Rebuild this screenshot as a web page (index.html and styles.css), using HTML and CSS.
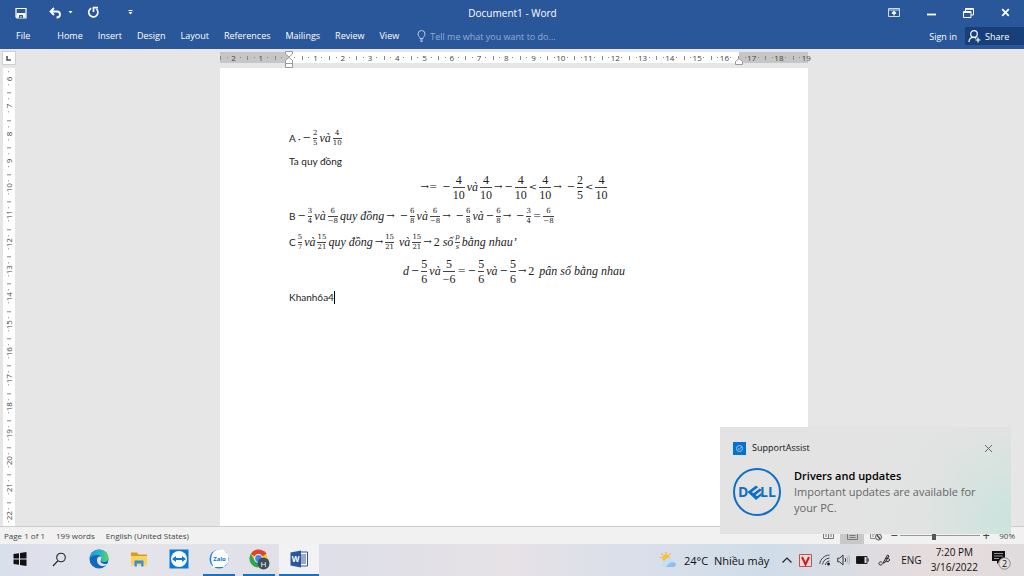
FILE: index.html
```html
<!DOCTYPE html>
<html lang="en">
<head>
<meta charset="utf-8">
<title>Document1 - Word</title>
<link rel="stylesheet" href="styles.css">
</head>
<body>
<div class="desktop">
  <header class="ribbon">
    <div class="titlebar">
      <div class="quick">
        <button class="icon-btn" aria-label="Save"><svg width="12" height="12" viewBox="0 0 12 12"><path d="M1 1.500h10v9.500H2L1 10z" fill="none" stroke="#fff" stroke-width="1.200"/><path d="M1.500 6h9v4.500h-9z" fill="#fff"/><path d="M4 8h4v3H6.500V9H5.500v2H4z" fill="#2a579a"/></svg></button>
        <button class="icon-btn undo" aria-label="Undo"><svg width="13" height="12" viewBox="0 0 13 12"><path d="M5 1 1.500 4.500 5 8M1.500 4.500H8a3 3 0 0 1 3 3c0 2-1.500 3-3.500 3" fill="none" stroke="#fff" stroke-width="1.800"/></svg></button>
        <button class="icon-btn drop" aria-label="Undo list"><svg width="5" height="3" viewBox="0 0 5 3"><path d="M.5 0h4L2.500 2.500z" fill="#fff"/></svg></button>
        <button class="icon-btn redo" aria-label="Repeat"><svg width="13" height="13" viewBox="0 0 13 13"><path d="M4.200 2.200A4.600 4.600 0 1 0 9.500 3M6.500 6V1.700H11" fill="none" stroke="#fff" stroke-width="1.700"/></svg></button>
        <button class="icon-btn more" aria-label="Customize toolbar"><svg width="5" height="5" viewBox="0 0 5 5"><path d="M.5 .5h4" stroke="#fff"/><path d="M.5 2h4L2.500 4.500z" fill="#fff"/></svg></button>
      </div>
      <h1 class="title">Document1 - Word</h1>
      <div class="window">
        <button class="icon-btn" aria-label="Ribbon display options"><svg width="12" height="9" viewBox="0 0 12 9"><path d="M.5.5h11v8H.5zM.5 2h11" fill="none" stroke="#cfdcf0"/><path d="M6 7.500V4M4 5.500 6 3.500l2 2" fill="none" stroke="#fff" stroke-width="1.300"/></svg></button>
        <button class="icon-btn" aria-label="Minimize"><svg width="9" height="9" viewBox="0 0 9 9"><path d="M0 6.500h9" stroke="#fff" stroke-width="1.800"/></svg></button>
        <button class="icon-btn" aria-label="Restore"><svg width="11" height="10" viewBox="0 0 11 10"><path d="M.5 3.500h7.500v6H.5zM.5 4.500h7.500M2.500 3V.5h8V7H8M2.500 1.300h8" fill="none" stroke="#fff"/></svg></button>
        <button class="icon-btn" aria-label="Close"><svg width="9" height="9" viewBox="0 0 9 9"><path d="m1.200 1.200 6.600 6.600m0-6.600L1.200 7.800" stroke="#fff" stroke-width="1.800"/></svg></button>
      </div>
    </div>
    <nav class="tabs">
      <button class="tab file">File</button>
      <button class="tab">Home</button>
      <button class="tab">Insert</button>
      <button class="tab">Design</button>
      <button class="tab">Layout</button>
      <button class="tab">References</button>
      <button class="tab">Mailings</button>
      <button class="tab">Review</button>
      <button class="tab">View</button>
      <label class="tell"><svg width="9" height="12" viewBox="0 0 9 12"><path d="M3 8.500C3 7 1 6.300 1 4a3.500 3.500 0 0 1 7 0c0 2.300-2 3-2 4.500zM3 10h3M3.500 11.500h2" fill="none" stroke="#b9cae6"/></svg><input type="text" placeholder="Tell me what you want to do..." aria-label="Tell me what you want to do"></label>
      <a class="signin" href="#">Sign in</a>
      <button class="share"><svg width="14" height="13" viewBox="0 0 14 13"><circle cx="6" cy="4" r="3.300" fill="none" stroke="#fff" stroke-width="1.200"/><path d="M1 12c0-3 2-4.700 4.500-4.700 1.200 0 2 .3 2.800.9M10 7.500v5M7.500 10h5" fill="none" stroke="#fff" stroke-width="1.200"/></svg>Share</button>
    </nav>
  </header>

  <main class="workspace">
    <div class="gutter">
      <button class="tabstop" aria-label="Tab stop"><svg width="6" height="6" viewBox="0 0 6 6"><path d="M1 1v4h4" fill="none" stroke="#555" stroke-width="1.600"/></svg></button>
      <div class="vruler"><div class="vscale">
        <span>6</span><span>7</span><span>8</span><span>9</span><span>10</span><span>11</span><span>12</span><span>13</span><span>14</span><span>15</span><span>16</span><span>17</span><span>18</span><span>19</span><span>20</span><span>21</span><span>22</span>
      </div></div>
    </div>
    <div class="canvas">
      <div class="hruler">
        <div class="hscale">
          <span>2</span><span>1</span><span class="zero"></span><span>1</span><span>2</span><span>3</span><span>4</span><span>5</span><span>6</span><span>7</span><span>8</span><span>9</span><span>10</span><span>11</span><span>12</span><span>13</span><span>14</span><span>15</span><span>16</span><span>17</span><span>18</span><span class="end">19</span>
        </div>
        <svg class="indent-left" width="8" height="17" viewBox="0 0 8 17"><path d="M.5.500h7V3L4 6 .5 3zM.5 12.500V9.500L4 6.500l3.500 3v3zM.5 12.500h7v4h-7z" fill="#fff" stroke="#999"/></svg>
        <svg class="indent-right" width="8" height="7" viewBox="0 0 8 7"><path d="M.5 6.500v-3L4 .5l3.500 3v3z" fill="#fff" stroke="#999"/></svg>
      </div>
      <article class="paper">
        <p class="line"><span>A ·</span><i class="op">−</i><span class="frac"><b>2</b><b>5</b></span><i>và</i><span class="frac"><b>4</b><b>10</b></span></p>
        <p class="line plain">Ta quy đồng</p>
        <p class="line display"><i class="op">→=</i><i class="op wide">−</i><span class="frac"><b>4</b><b>10</b></span><i>và</i><span class="frac"><b>4</b><b>10</b></span><i class="op">→</i><i class="op">−</i><span class="frac"><b>4</b><b>10</b></span><i class="op">&lt;</i><span class="frac"><b>4</b><b>10</b></span><i class="op">→</i><i class="op wide">−</i><span class="frac"><b>2</b><b>5</b></span><i class="op">&lt;</i><span class="frac"><b>4</b><b>10</b></span></p>
        <p class="line"><span>B</span><i class="op">−</i><span class="frac"><b>3</b><b>4</b></span><i>và</i><span class="frac"><b>6</b><b>−8</b></span><i>quy đồng</i><i class="op">→</i><i class="op wide">−</i><span class="frac"><b>6</b><b>8</b></span><i>và</i><span class="frac"><b>6</b><b>−8</b></span><i class="op">→</i><i class="op wide">−</i><span class="frac"><b>6</b><b>8</b></span><i>và</i><i class="op">−</i><span class="frac"><b>6</b><b>8</b></span><i class="op">→</i><i class="op wide">−</i><span class="frac"><b>3</b><b>4</b></span><i class="op">=</i><span class="frac"><b>6</b><b>−8</b></span></p>
        <p class="line"><span>C</span><span class="frac"><b>5</b><b>7</b></span><i>và</i><span class="frac"><b>15</b><b>21</b></span><i>quy đồng</i><i class="op">→</i><span class="frac"><b>15</b><b>21</b></span><i class="wide">và</i><span class="frac"><b>15</b><b>21</b></span><i class="op">→</i><i><em>2</em> số</i><span class="frac slant"><b>p</b><b>s</b></span><i>bằng nhau’</i></p>
        <p class="line display"><i>d</i><i class="op">−</i><span class="frac"><b>5</b><b>6</b></span><i>và</i><span class="frac"><b>5</b><b>−6</b></span><i class="op">=</i><i class="op">−</i><span class="frac"><b>5</b><b>6</b></span><i>và</i><i class="op">−</i><span class="frac"><b>5</b><b>6</b></span><i class="op">→</i><i><em>2</em></i><i class="wide">pân số bằng nhau</i></p>
        <p class="line plain">Khanh6a4<span class="caret"></span></p>
      </article>
    </div>
  </main>

  <footer class="status">
    <span>Page 1 of 1</span><span>199 words</span><span>English (United States)</span>
    <div class="views">
      <button class="view" aria-label="Read mode"><svg width="11" height="9" viewBox="0 0 11 9"><path d="M.5.5h4.500l.5.500.5-.5h4.500v7H6l-.5.500-.5-.5H.5zM5.500 1v7M2 3h2M2 5h2M7 3h2M7 5h2" fill="none" stroke="#777"/></svg></button>
      <button class="view active" aria-label="Print layout"><svg width="11" height="9" viewBox="0 0 11 9"><path d="M.5.5h10v8H.5zM2.500 2.500h6M2.500 4.500h6M2.500 6.500h6" fill="none" stroke="#777"/></svg></button>
      <button class="view" aria-label="Web layout"><svg width="12" height="10" viewBox="0 0 12 10"><path d="M6 .5H.5v7H5M2 3h3M2 5h2" fill="none" stroke="#888"/><circle cx="8.500" cy="6" r="3" fill="#eee" stroke="#555"/><path d="m7 4 3 4" stroke="#555" stroke-width="1.500"/></svg></button>
      <button class="zoom-btn" aria-label="Zoom out">−</button>
      <input class="zoom" type="range" min="10" max="200" value="90" aria-label="Zoom">
      <button class="zoom-btn" aria-label="Zoom in">+</button>
      <span class="percent">90%</span>
    </div>
  </footer>

  <div class="taskbar">
    <button class="task" aria-label="Start"><svg width="14" height="14" viewBox="0 0 14 14"><path d="M.5 2 6 1.200v5.300H.5zM7 1l6.500-1v6.500H7zM.5 7.500H6v5.300L.5 12zM7 7.500h6.500V14L7 13z" fill="#111"/></svg></button>
    <button class="task" aria-label="Search"><svg width="15" height="15" viewBox="0 0 15 15"><circle cx="9" cy="5.500" r="4.300" fill="none" stroke="#222" stroke-width="1.100"/><path d="M5.800 8.800 1 14" stroke="#222" stroke-width="1.200"/></svg></button>
    <button class="task" aria-label="Edge"><svg width="20" height="20" viewBox="0 0 20 20"><defs><linearGradient id="eg" x1="0" y1="0" x2="1" y2="0"><stop offset="0" stop-color="#1a9be0"/><stop offset=".6" stop-color="#28b9c0"/><stop offset="1" stop-color="#5fd65a"/></linearGradient></defs><circle cx="10" cy="10" r="9.500" fill="#1467bd"/><path d="M.5 10C.8 4 5 .5 10 .5c6 0 9.500 4.300 9.500 8 0 3-2.200 4.500-4.500 4.500-2 0-3-.7-3-1.500 0-.6.700-1 .7-2.200 0-1.800-1.600-3.300-4-3.300C5 6 1.500 7 .5 10z" fill="url(#eg)"/><path d="M12.500 8.500c-.5-1.700-4.500-1.500-4.500 2.500 0 4 3 6 6 6 2 0 4-1 5-2.500-2 1-6 .8-7.300-1.500-.6-1.500.8-2.500.8-4.500z" fill="#e1e7f0"/></svg></button>
    <button class="task" aria-label="File Explorer"><svg width="18" height="16" viewBox="0 0 18 16"><path d="M1 1.500h6l1.500 2H17v3H1z" fill="#d99b1d"/><path d="M1 5h16v9.500H1z" fill="#fcd35e"/><path d="M4.500 15.500V9.500h9v6h-2.300v-3H6.800v3z" fill="#2f8fdc"/></svg></button>
    <button class="task" aria-label="TeamViewer"><svg width="20" height="20" viewBox="0 0 20 20"><path d="M.5.500h19v19H.5z" fill="#0a78d6"/><circle cx="10" cy="10" r="8" fill="#fff"/><path d="m3 10 4-3v2h6V7l4 3-4 3v-2H7v2z" fill="#0a78d6"/></svg></button>
    <button class="task open" aria-label="Zalo"><svg width="20" height="20" viewBox="0 0 20 20"><circle cx="10" cy="10" r="9.500" fill="#1580ee"/><path d="M9 .5h5l5 5v8l-4 4.500H7l-4 1 1-2.500C.5 11 2 2 9 .500z" fill="#fff"/><text x="10.500" y="12" text-anchor="middle" class="zalo">Zalo</text></svg></button>
    <button class="task open" aria-label="Chrome"><svg width="21" height="21" viewBox="0 0 21 21"><circle cx="9.500" cy="9.500" r="9" fill="#f7c928"/><path d="M9.500 9.500 1.700 5A9 9 0 0 1 17.300 5z" fill="#df4532"/><path d="M1.700 5a9 9 0 0 0 7 13.500l3-7L5.500 11z" fill="#2fa653"/><path d="M9 5h8.300L16 2.500 6 1z" fill="#df4532"/><circle cx="9.500" cy="9.500" r="4.400" fill="#fff"/><circle cx="9.500" cy="9.500" r="3.400" fill="#4285ef"/><circle cx="14.500" cy="14.500" r="6" fill="#3d5059"/><text x="14.500" y="17.500" text-anchor="middle" class="badge-letter">H</text></svg></button>
    <button class="task current" aria-label="Word"><svg width="18" height="18" viewBox="0 0 18 18"><path d="M9 2h8.500v14H9z" fill="#fff" stroke="#2b579a"/><path d="M11 5h5M11 7h5M11 9h5M11 11h5M11 13h5" stroke="#2b579a"/><path d="M.5 2.500 11 .5v17L.5 15.500z" fill="#2b579a"/><text x="5.700" y="12" text-anchor="middle" class="word-letter">W</text></svg></button>
    <div class="tray">
      <button class="weather"><svg width="19" height="16" viewBox="0 0 19 16"><circle cx="7" cy="6" r="3.800" fill="#fbc02d"/><path d="M7 0v1.500M1 5.500h1.500M2.500 1.500l1.200 1.200M11.500 1.500l-1 1" stroke="#f5a623" stroke-width="1.200"/><path d="M5.500 15a3.300 3.300 0 0 1 .3-6.500 4 4 0 0 1 7.500-.3A3.500 3.500 0 0 1 14.500 15z" fill="#c4dff5"/><path d="M7 15c3-5 7-6 10-3.500 0 2-1 3.500-2.500 3.500z" fill="#8fbfe8"/></svg>24°C&nbsp; Nhiều mây</button>
      <button class="mini" aria-label="Show hidden icons"><svg width="10" height="6" viewBox="0 0 10 6"><path d="m.5 5.500 4.500-4.500 4.500 4.500" fill="none" stroke="#222" stroke-width="1.200"/></svg></button>
      <button class="mini" aria-label="Unikey"><svg width="13" height="13" viewBox="0 0 13 13"><path d="M.5.500h12v12H.5z" fill="#f3dad8" stroke="#b55"/><path d="m3 3 3.500 7.500L10 3" fill="none" stroke="#c81e1e" stroke-width="2"/></svg></button>
      <button class="mini" aria-label="Wi-Fi"><svg width="12" height="12" viewBox="0 0 12 12"><path d="M.7 10C1.500 5 5 1.500 10.500 1M3.500 10.500c.5-3.500 3-6 7-6.500M6.300 11c.3-2 1.900-3.700 4.200-4" fill="none" stroke="#444"/><circle cx="9.500" cy="10" r="1.500" fill="#222"/></svg></button>
      <button class="mini" aria-label="Volume"><svg width="13" height="12" viewBox="0 0 13 12"><path d="M.7 4.200h2L6 1v10L2.700 7.800h-2z" fill="none" stroke="#333"/><path d="M8 4c.8 1 .8 3 0 4" fill="none" stroke="#333"/><path d="M9.700 2.700c1.500 2 1.500 4.600 0 6.600M11.300 1.500c2 2.500 2 6.500 0 9" fill="none" stroke="#999" stroke-width=".8"/></svg></button>
      <button class="mini" aria-label="Battery"><svg width="13" height="8" viewBox="0 0 13 8"><path d="M.5.500h10.500v7H.5zM12.200 2.500v3" fill="none" stroke="#222"/><path d="M1 1h7.500v6H1z" fill="#111"/></svg></button>
      <button class="mini pen" aria-label="Pen"><svg width="12" height="12" viewBox="0 0 12 12"><path d="M4 8.500C2.500 7 .5 8.500 1 10s3 1.500 4-1l4.500-8 1.500 1-4 6.500-2 .5M8 4.500c2-1 3.500 0 3.500 1.500S9 8 8 7" fill="none" stroke="#222"/></svg></button>
      <button class="lang">ENG</button>
      <button class="clock"><span>7:20 PM</span><span>3/16/2022</span></button>
      <button class="notify" aria-label="Notifications, 2 new"><svg width="20" height="20" viewBox="0 0 20 20"><path d="M0 1h13v10H8l-3 3v-3H0z" fill="#111"/><path d="M2 3.500h9M2 6h9M2 8.500h5" stroke="#ccc" stroke-width=".7"/><circle cx="12.500" cy="13.500" r="5.700" fill="#e3dede" stroke="#888"/><text x="12.500" y="17" text-anchor="middle" class="count">2</text></svg></button>
    </div>
  </div>

  <aside class="toast">
    <div class="toast-head">
      <svg width="13" height="13" viewBox="0 0 13 13"><path d="M0 0h13v13H0z" fill="#0672cb"/><circle cx="6.500" cy="6.500" r="3" fill="none" stroke="#9cc8ee"/><path d="m5 6.500 1.200 1L8.500 5" fill="none" stroke="#9cc8ee"/></svg>
      <span>SupportAssist</span>
      <button class="icon-btn close" aria-label="Dismiss"><svg width="9" height="9" viewBox="0 0 9 9"><path d="m1 1 7 7m0-7L1 8" stroke="#666"/></svg></button>
    </div>
    <div class="toast-body">
      <svg width="48" height="48" viewBox="0 0 48 48"><circle cx="24" cy="24" r="23" fill="none" stroke="#0f6fc6" stroke-width="2"/><text x="5" y="29" class="dell">D</text><path d="m14.500 24 8.500-6.500 2.200 1.700-6.300 4.900 1.500 1.200 6.300-4.900 2.200 1.700-6.300 4.900 1.500 1.200 4.400-3.500v2.800L23 32z" fill="#0f6fc6"/><text x="27" y="29" class="dell">L</text><text x="35" y="29" class="dell">L</text></svg>
      <div><h2>Drivers and updates</h2><p>Important updates are available for your PC.</p></div>
    </div>
  </aside>
</div>
</body>
</html>
```
FILE: styles.css
```css
* { box-sizing: border-box; }
body { margin: 0; font-family: "Open Sans", "Noto Sans", sans-serif; font-size: 9px; color: #444; }
button { border: 0; padding: 0; margin: 0; background: none; font: inherit; color: inherit; }
svg { display: block; flex: none; }
h1, h2, p { margin: 0; font-weight: 400; }
.desktop { position: relative; display: flex; flex-direction: column; height: 100vh; overflow: hidden; }

/* Ribbon */
.ribbon { background: #2a579a; color: #fff; }
.titlebar { display: grid; grid-template-columns: 1fr auto 1fr; align-items: center; height: 25px; padding: 0 14px 0 15px; }
.quick, .window { display: flex; align-items: center; }
.window { justify-content: flex-end; gap: 27px; }
.undo { margin-left: 22px; }
.drop { margin-left: 6px; }
.redo { margin-left: 14px; }
.more { margin-left: 28px; }
.title { font-size: 10px; line-height: 14px; }
.tabs { display: flex; align-items: center; height: 24px; gap: 15px; padding: 0 0 2px 16px; }
.tab { line-height: 14px; }
.file { margin-right: 12px; }
.tell { display: flex; align-items: center; gap: 4px; flex: 1; margin-left: 3px; }
.tell input { flex: 1; min-width: 0; border: 0; padding: 0; background: none; font: inherit; color: #fff; outline: 0; }
.tell input::placeholder { color: #92acd6; opacity: 1; }
.signin { color: #fff; text-decoration: none; margin-right: -7px; }
.share { display: flex; align-items: center; gap: 3px; height: 18px; width: 59px; padding-left: 3px; background: #17407b; }

/* Workspace */
.workspace { flex: 1; min-height: 0; display: flex; background: #e6e6e6; padding-right: 12px; }
.gutter { width: 16px; display: flex; flex-direction: column; gap: 3px; padding-top: 2px; }
.tabstop { height: 14px; margin-left: 2px; display: grid; place-items: center; background: #fff; border: 1px solid #d0d0d0; flex: none; }
.vruler { flex: 1; min-height: 0; margin: 0 1px 0 3px; overflow: hidden; background: #fff; display: flex; flex-direction: column; justify-content: center; }
.vscale { flex: none; height: 464px; display: flex; flex-direction: column; }
.vscale span {
  flex: 1; writing-mode: vertical-rl; transform: rotate(180deg); text-align: center; font-size: 8px; line-height: 12px;
  background:
    linear-gradient(#888, #888) 50% 100% / 4px 1px no-repeat,
    linear-gradient(#888, #888) 50% 25% / 1px 1px no-repeat,
    linear-gradient(#888, #888) 50% 75% / 1px 1px no-repeat;
}
.canvas { flex: 1; display: flex; flex-direction: column; align-items: center; gap: 5px; padding-top: 3px; }
.hruler { position: relative; width: 588px; height: 11px; background: linear-gradient(90deg, #c6c6c6 69px, #fff 69px 519px, #c6c6c6 519px); flex: none; }
.hscale { width: 600px; display: flex; }
.hscale span {
  flex: 1; height: 11px; text-align: center; font-size: 8px; line-height: 11px;
  background:
    linear-gradient(#888, #888) 0 50% / 1px 4px no-repeat,
    linear-gradient(#888, #888) 25% 50% / 1px 1px no-repeat,
    linear-gradient(#888, #888) 75% 50% / 1px 1px no-repeat;
}
.hscale .end { background-size: 1px 4px, 1px 1px, 0 0; }
.indent-left { position: absolute; left: 65px; top: -1px; }
.indent-right { position: absolute; left: 515px; top: 6px; }
.paper { width: 588px; flex: 1; background: #fff; padding: 57px 69px 0; color: #222; font-family: Lato, "Open Sans", sans-serif; font-size: 10px; }

/* Document lines and fractions */
.line { display: flex; align-items: center; height: 26px; gap: 2px; white-space: pre; }
.line.plain { height: 20px; gap: 0; }
.line.display { height: 32px; justify-content: center; }
.line i { font-family: "Liberation Serif", serif; font-size: 12px; line-height: 14px; }
.line .op { font-style: normal; font-family: "DejaVu Serif", serif; font-size: 10px; }
.line .wide { margin-left: 3px; }
.line em { font-style: normal; }
.frac { display: inline-flex; flex-direction: column; text-align: center; font-family: "DejaVu Serif", serif; font-size: 7px; line-height: 9px; }
.frac b { font-weight: 400; }
.frac b + b { border-top: 1px solid #444; }
.display .frac { font-family: "Liberation Serif", serif; font-size: 12px; line-height: 14px; }
.slant { font-style: italic; }
.caret { width: 1px; height: 13px; background: #000; }

/* Status bar */
.status { display: flex; align-items: center; height: 18px; gap: 11px; padding: 0 9px 0 4px; background: #f1f1f1; border-top: 1px solid #ccc; font-size: 8px; flex: none; }
.views { margin-left: auto; display: flex; align-items: center; height: 17px; }
.view { width: 24px; height: 17px; display: grid; place-items: center; }
.view.active { background: #c8c8c8; }
.zoom-btn { width: 12px; font-size: 13px; line-height: 15px; color: #444; }
.zoom { appearance: none; width: 80px; height: 1px; background: #999; margin: 0; }
.zoom::-webkit-slider-thumb { appearance: none; width: 4px; height: 8px; background: #555; }
.percent { margin-left: 7px; }

/* Taskbar */
.taskbar { display: flex; height: 32px; flex: none; color: #111; background: linear-gradient(90deg, #dadfec, #e5e4ea 12%, #dedfe8 32%, #e6e2e6 50%, #dadfea 62%, #cfdde9 75%, #dcdce2 84%, #e7dcdc 92%, #dfdbdd); }
.task { width: 40px; display: grid; place-items: center; border-bottom: 2px solid transparent; }
.task:first-child { width: 39px; }
.open { background: linear-gradient(#1473c8, #1473c8) 50% 100% / 32px 2px no-repeat border-box; }
.current { background: #f2f2f6; border-bottom-color: #1473c8; }
.zalo { font: 700 6px "Open Sans", sans-serif; fill: #1470e0; }
.badge-letter { font: 8px "Open Sans", sans-serif; fill: #fff; }
.word-letter { font: 700 8px "Open Sans", sans-serif; fill: #fff; }
.tray { margin-left: auto; display: flex; align-items: center; padding-right: 12px; }
.weather { display: flex; align-items: center; gap: 6px; margin-right: 8px; font-size: 11px; }
.mini { width: 19px; display: grid; place-items: center; }
.pen { margin-left: 2px; }
.lang { margin-left: 8px; font-size: 10px; }
.clock { display: flex; flex-direction: column; align-items: center; margin: 0 14px 0 9px; font-size: 10px; line-height: 15px; }
.count { font: 9px "Open Sans", sans-serif; fill: #111; }

/* Notification */
.toast { position: absolute; right: 13px; bottom: 42px; width: 291px; height: 107px; padding: 14px 18px 0 13px; background: radial-gradient(circle at 100% 85%, #cbe3dd, #e1e3e2 30%, #e3e3e3 60%); color: #111; }
.toast-head { display: flex; align-items: center; gap: 6px; font-size: 9px; line-height: 14px; }
.close { margin-left: auto; }
.toast-body { display: flex; align-items: center; gap: 13px; margin-top: 13px; }
.toast h2 { font-size: 11px; line-height: 16px; font-weight: 600; color: #000; }
.toast p { font-size: 11px; line-height: 16px; color: #666; }
.dell { font: 700 14px "Open Sans", sans-serif; fill: #0f6fc6; }
```
